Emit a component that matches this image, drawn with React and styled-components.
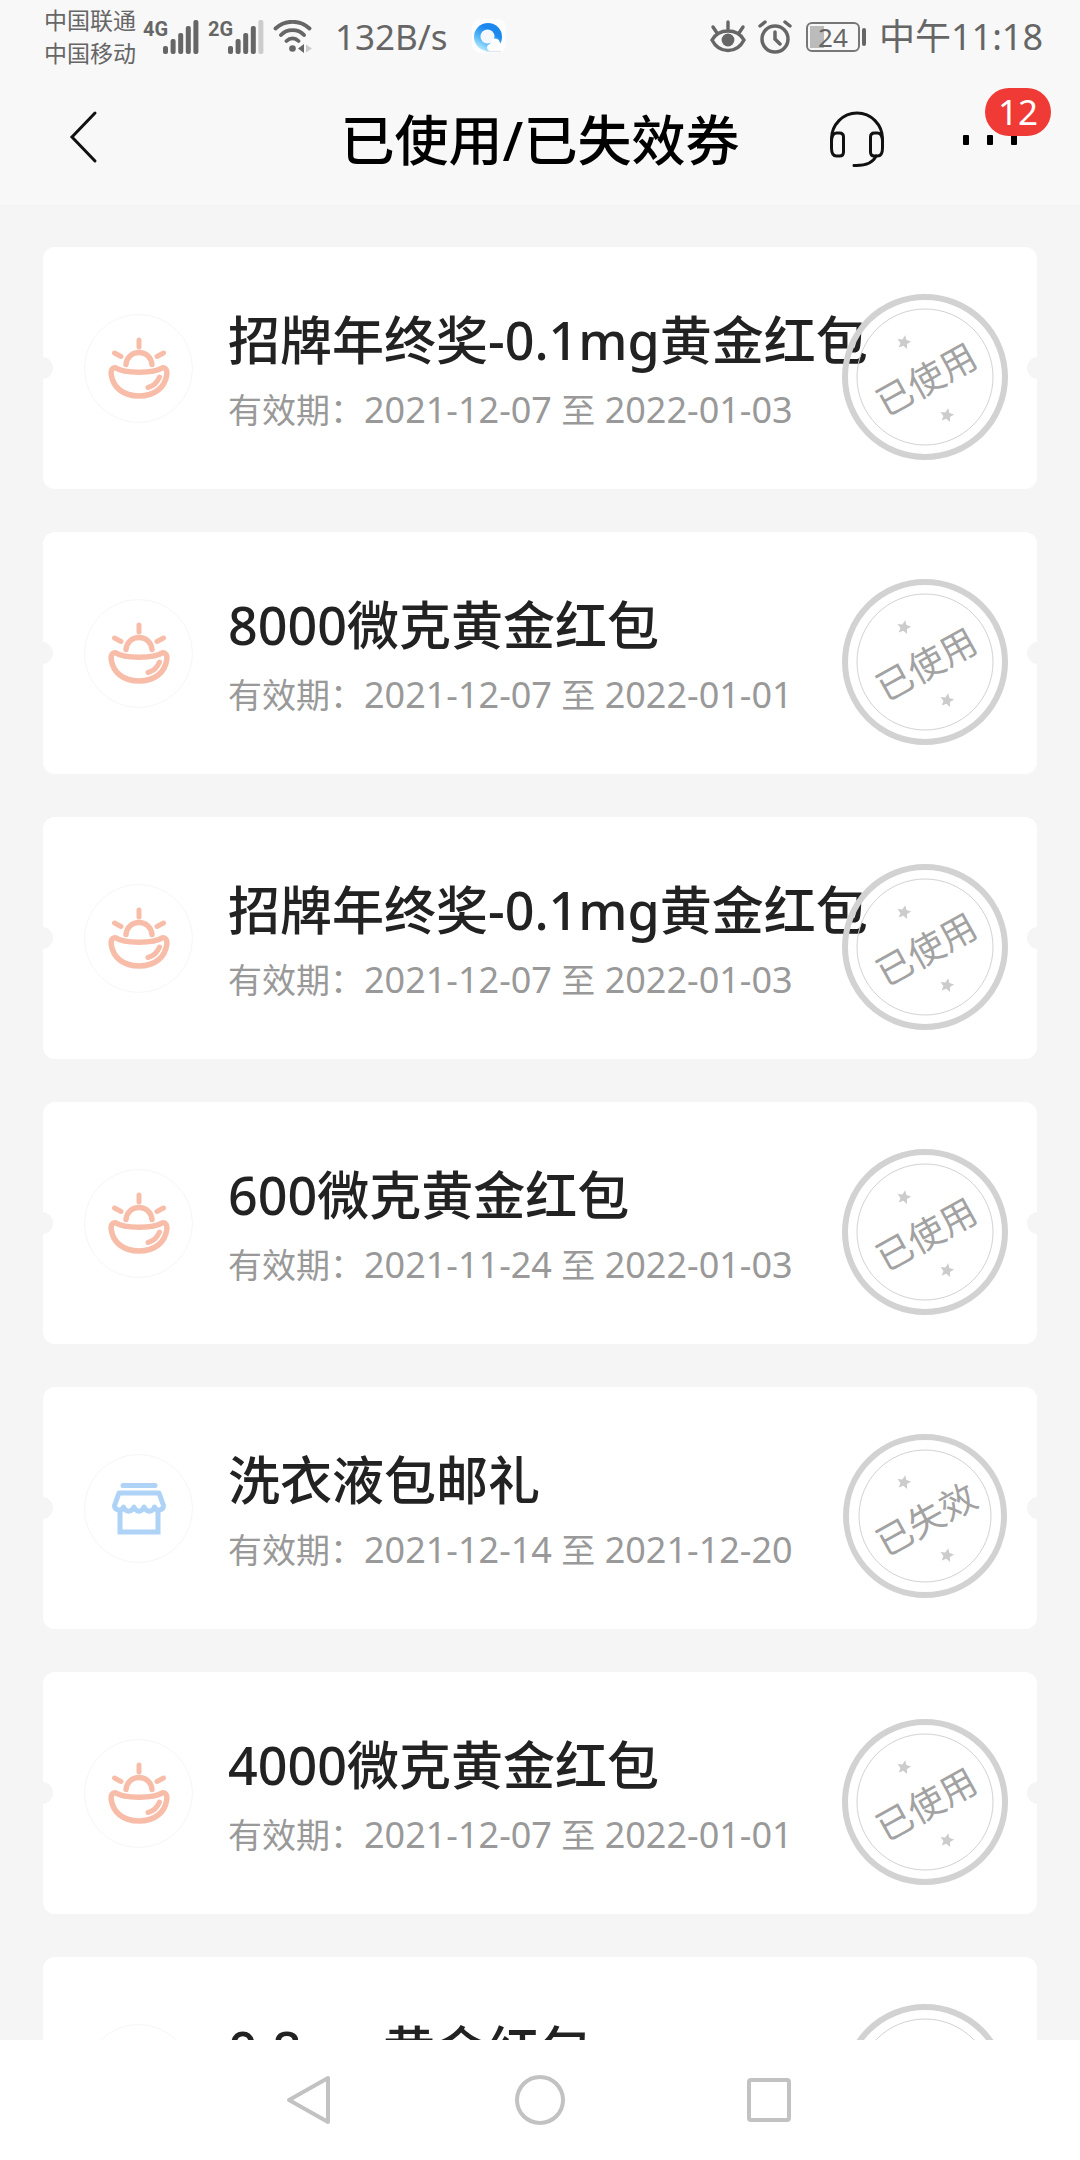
import React from "react";
import styled, { createGlobalStyle } from "styled-components";

const GlobalStyle = createGlobalStyle`
  * {
    box-sizing: border-box;
  }
  body {
    margin: 0;
    background: #f5f5f5;
    font-family: "Noto Sans", "Noto Sans CJK SC", sans-serif;
  }
  button {
    padding: 0;
    border: 0;
    background: none;
    font: inherit;
    cursor: pointer;
  }
  svg {
    display: block;
    flex: none;
  }
`;

const Page = styled.div`
  height: 100vh;
  display: flex;
  flex-direction: column;
  overflow: hidden;
`;

const StatusBar = styled.div`
  flex: none;
  height: 74px;
  padding: 0 37px 0 44px;
  display: flex;
  justify-content: space-between;
  background: #f8f8f8;
  color: #666;
`;

const StatusGroup = styled.div`
  display: flex;
  align-items: center;
`;

const Carriers = styled.div`
  font-size: 23px;
  line-height: 33px;
  margin-right: 7px;
`;

const Signal = styled.div`
  display: flex;
  align-items: flex-start;
  margin-right: 9px;
`;

const Network = styled.span`
  width: 20px;
  font: bold 20px/18px "Liberation Sans Narrow", "Roboto", sans-serif;
`;

const StatusText = styled.span`
  font-size: 36px;
  line-height: 40px;
`;

const Speed = styled(StatusText)`
  font-size: 35px;
  margin: 0 22px;
`;

const Battery = styled.div`
  display: flex;
  align-items: center;
  gap: 2px;
  margin: 0 13px 0 14px;
  &::after {
    content: "";
    width: 4px;
    height: 18px;
    border-radius: 2px;
    background: #666;
  }
`;

const BatteryBody = styled.span`
  width: 54px;
  height: 30px;
  border: 2px solid #777;
  border-radius: 6px;
  font-size: 26px;
  line-height: 26px;
  text-align: center;
  background: linear-gradient(#bbb, #bbb) 2px 2px / 14px 22px no-repeat;
`;

const Header = styled.header`
  flex: none;
  height: 132px;
  padding: 0 56px;
  display: grid;
  grid-template-columns: 1fr auto 1fr;
  align-items: center;
  background: #f8f8f8;
  border-bottom: 1px solid #f4f4f4;
`;

const Title = styled.h1`
  margin: 0;
  font-size: 54px;
  line-height: 64px;
  font-weight: 500;
  color: #000;
`;

const Actions = styled.div`
  display: flex;
  justify-content: flex-end;
  align-items: center;
  gap: 76px;
`;

const MoreButton = styled.button`
  position: relative;
  margin-right: 7px;
`;

const Badge = styled.span`
  position: absolute;
  left: 24px;
  bottom: 9px;
  width: 66px;
  height: 48px;
  border-radius: 24px;
  background: #f03a36;
  color: #fff;
  font-size: 35px;
  line-height: 48px;
  text-align: center;
`;

const List = styled.main`
  flex: 1;
  min-height: 0;
  overflow: hidden;
  padding: 41px 43px 0;
  display: flex;
  flex-direction: column;
  gap: 43px;
`;

const Card = styled.article`
  position: relative;
  flex: none;
  height: 242px;
  padding: 0 41px;
  display: flex;
  align-items: center;
  gap: 35px;
  border-radius: 12px;
  background: #fff;
`;

const Notch = styled.span`
  position: absolute;
  top: 110px;
  ${(p) => p.$side}: -12px;
  width: 22px;
  height: 22px;
  border-radius: 50%;
  background: #f5f5f5;
`;

const IconRing = styled.div`
  flex: none;
  width: 109px;
  height: 109px;
  display: flex;
  justify-content: center;
  align-items: center;
  border: 1px solid #f6f6f6;
  border-radius: 50%;
`;

const Info = styled.div`
  white-space: nowrap;
  padding-top: 12px;
`;

const Name = styled.h2`
  margin: 0;
  font-size: 52px;
  line-height: 72px;
  font-weight: 500;
  color: #222;
`;

const Validity = styled.p`
  margin: 0;
  font-size: 34px;
  line-height: 68px;
  color: #999;
`;

const Dates = styled.span`
  font-size: 36px;
`;

const StampBox = styled.div`
  position: absolute;
  top: 47px;
  right: 29px;
  width: 166px;
  height: 166px;
  display: flex;
  justify-content: center;
  align-items: center;
  svg {
    position: absolute;
    inset: 0;
  }
`;

const StampText = styled.span`
  font-family: "Noto Sans CJK SC", sans-serif;
  font-size: 36px;
  line-height: 40px;
  color: #a2a2a2;
  transform: rotate(-29deg);
`;

const NavBar = styled.nav`
  flex: none;
  height: 120px;
  display: flex;
  justify-content: center;
  align-items: center;
  gap: 180px;
  background: #fff;
`;

const coupons = [
  { name: "招牌年终奖-0.1mg黄金红包", from: "2021-12-07", to: "2022-01-03" },
  { name: "8000微克黄金红包", from: "2021-12-07", to: "2022-01-01" },
  { name: "招牌年终奖-0.1mg黄金红包", from: "2021-12-07", to: "2022-01-03" },
  { name: "600微克黄金红包", from: "2021-11-24", to: "2022-01-03" },
  { name: "洗衣液包邮礼", from: "2021-12-14", to: "2021-12-20", shop: true, expired: true },
  { name: "4000微克黄金红包", from: "2021-12-07", to: "2022-01-01" },
  { name: "0.8mg黄金红包" },
];

const SignalBars = ({ weak }) => (
  <svg width="36" height="34" viewBox="0 0 36 34">
    {[26, 19, 13, 6, 0].map((y, i) => (
      <rect key={y} x={i * 7.6} y={y} width="5" height={34 - y} rx="2" fill={weak && i === 4 ? "#ccc" : "#666"} />
    ))}
  </svg>
);

const WifiIcon = () => (
  <svg width="40" height="34" viewBox="0 0 40 34" fill="none" stroke="#666" strokeWidth="3.8" strokeLinecap="round">
    <path d="M2.5 8.500C12-.500 27-.500 36.500 8.500M8 15C14 8.500 25 8.500 31 15M13.500 21C17 17.500 22 17.500 25.500 21" />
    <circle cx="19.500" cy="28.500" r="3.300" fill="#666" stroke="none" />
    <path d="M31 24v9l-6-4.500z" fill="#666" stroke="none" />
    <path d="M33 24.500v8l6-4z" fill="#ccc" stroke="none" />
  </svg>
);

const BrowserIcon = () => (
  <svg width="38" height="38" viewBox="0 0 38 38">
    <defs>
      <linearGradient id="ring" x1="0.800" y1="0" x2="0.200" y2="1">
        <stop offset="0.300" stopColor="#1c88ee" />
        <stop offset="0.650" stopColor="#53b8f8" />
        <stop offset="1" stopColor="#c9f1fd" />
      </linearGradient>
    </defs>
    <rect x="2" y="1" width="34" height="34" rx="8" fill="#fdfdfd" />
    <circle cx="18" cy="19" r="14" fill="url(#ring)" />
    <circle cx="17.500" cy="18.500" r="7" fill="#f4f8fc" />
    <path d="M20 33c-4-1-4-6 0-7 1-7 9-7 10-1 4 1 5 8 0 8z" fill="#fff" />
    <path d="M16 33.500h15" stroke="#dfe6ee" strokeWidth="1.200" />
  </svg>
);

const EyeIcon = () => (
  <svg width="36" height="34" viewBox="0 0 36 34" fill="none" stroke="#666" strokeWidth="3.400" strokeLinecap="round">
    <path d="M2 20C9 8 27 8 34 20 27 34 9 34 2 20z" />
    <path d="M18 9V2M7 13 3 7M29 13l4-6" />
    <circle cx="18" cy="20" r="6.400" fill="#666" stroke="none" />
  </svg>
);

const AlarmIcon = () => (
  <svg width="34" height="34" viewBox="0 0 34 34" fill="none" stroke="#666" strokeWidth="3.500" strokeLinecap="round">
    <circle cx="17" cy="19" r="13" />
    <path d="M17 12v7l5 5M2 6l5-4M32 6l-5-4" />
  </svg>
);

const HeadsetIcon = () => (
  <svg width="56" height="58" viewBox="0 0 56 58" fill="none" stroke="#111" strokeWidth="3">
    <path d="M2.500 33V28a25.500 26 0 0 1 51 0v5" />
    <path d="M2.500 31c0-5 1-9 5-9h3q4 0 4 4v15q0 4-4 4h-3c-4 0-5-4-5-8z" />
    <path d="M53.500 31c0-5-1-9-5-9h-3q-4 0-4 4v15q0 4 4 4h3c4 0 5-4 5-8z" />
    <path d="M47 45c-3 7-10 10-22 9.500" strokeLinecap="round" />
  </svg>
);

const IngotIcon = () => (
  <svg width="62" height="62" viewBox="0 0 62 62" fill="none" stroke="#f8bda9" strokeWidth="5.500" strokeLinecap="round" strokeLinejoin="round">
    <path d="M8 31C16 36.500 46 36.500 54 31 57.500 30 59.500 33 58.700 38 57 50 47 59 31 59S5 50 3.300 38C2.500 33 4.500 30 8 31z" />
    <path d="M18 27.500C19.500 11.500 42.500 11.500 44 27.500" />
    <path d="M31 3v7M6.500 16l6.500 3.500M55.500 16l-6.500 3.500M51.500 40c-2 5-6 9-11.500 10.500" strokeWidth="5" />
  </svg>
);

const ShopIcon = () => (
  <svg width="56" height="54" viewBox="0 0 56 54" fill="none" stroke="#afd2f7" strokeWidth="5" strokeLinejoin="round">
    <path d="M12 4.500h32" strokeLinecap="round" />
    <path d="M8 12h40l4.500 12.500c0 5-7 6.500-9 1.500-2 5.500-8 5.500-10.500 0-2 5.500-8 5.500-10 0-2.500 5.500-8.500 5.500-10.500 0-2 5-9 3.500-9-1.500z" />
    <path d="M9 31v20h38V31" strokeLinejoin="miter" />
  </svg>
);

const STAR = "M0-6 1.800-2 6-1.600 2.900 1.300 3.700 5.600 0 3.400-3.700 5.600-2.900 1.300-6-1.600-1.800-2z";

const Stamp = ({ expired }) => (
  <StampBox>
    <svg viewBox="0 0 166 166" fill="none" stroke="#d2d2d2">
      <circle cx="83" cy={expired ? 82 : 83} r={expired ? 79 : 80} strokeWidth="6" />
      <circle cx="83" cy={expired ? 82 : 83} r={expired ? 66 : 68} />
      <path d={STAR} transform="translate(62 48) rotate(10) scale(1.15)" fill="#ccc" stroke="none" />
      <path d={STAR} transform="translate(105 121) rotate(10) scale(1.15)" fill="#ccc" stroke="none" />
    </svg>
    <StampText>{expired ? "已失效" : "已使用"}</StampText>
  </StampBox>
);

export default function App() {
  return (
    <Page>
      <GlobalStyle />
      <StatusBar>
        <StatusGroup>
          <Carriers>
            <div>中国联通</div>
            <div>中国移动</div>
          </Carriers>
          <Signal>
            <Network>4G</Network>
            <SignalBars />
          </Signal>
          <Signal>
            <Network>2G</Network>
            <SignalBars weak />
          </Signal>
          <WifiIcon />
          <Speed>132B/s</Speed>
          <BrowserIcon />
        </StatusGroup>
        <StatusGroup>
          <StatusGroup style={{ gap: 12 }}>
            <EyeIcon />
            <AlarmIcon />
          </StatusGroup>
          <Battery>
            <BatteryBody>24</BatteryBody>
          </Battery>
          <StatusText>中午11:18</StatusText>
        </StatusGroup>
      </StatusBar>

      <Header>
        <div>
          <button aria-label="返回">
            <svg width="56" height="56" viewBox="0 0 56 56" fill="none" stroke="#111" strokeWidth="3" strokeLinecap="round">
              <path d="M39 4 16 28l23 24" />
            </svg>
          </button>
        </div>
        <Title>已使用/已失效券</Title>
        <Actions>
          <button aria-label="客服">
            <HeadsetIcon />
          </button>
          <MoreButton aria-label="更多">
            <svg width="56" height="10" viewBox="0 0 56 10">
              <rect x="2" width="6" height="10" rx="1" />
              <rect x="26" width="6" height="10" rx="1" />
              <rect x="50" width="6" height="10" rx="1" />
            </svg>
            <Badge>12</Badge>
          </MoreButton>
        </Actions>
      </Header>

      <List>
        {coupons.map((c, i) => (
          <Card key={i}>
            <Notch $side="left" />
            <Notch $side="right" />
            <IconRing>{c.shop ? <ShopIcon /> : <IngotIcon />}</IconRing>
            <Info>
              <Name>{c.name}</Name>
              <Validity>
                有效期：
                {c.from && (
                  <>
                    <Dates>{c.from} </Dates>至<Dates> {c.to}</Dates>
                  </>
                )}
              </Validity>
            </Info>
            <Stamp expired={c.expired} />
          </Card>
        ))}
      </List>

      <NavBar>
        <button aria-label="后退">
          <svg width="50" height="52" viewBox="0 0 50 52" fill="none" stroke="#c2c2c2" strokeWidth="4" strokeLinejoin="round">
            <path d="M43 4v44L4 26z" />
          </svg>
        </button>
        <button aria-label="主页">
          <svg width="50" height="52" viewBox="0 0 50 52" fill="none" stroke="#c2c2c2" strokeWidth="4">
            <circle cx="25" cy="26" r="23" />
          </svg>
        </button>
        <button aria-label="最近任务">
          <svg width="50" height="52" viewBox="0 0 50 52" fill="none" stroke="#c2c2c2" strokeWidth="4">
            <rect x="4" y="6" width="40" height="40" rx="2" />
          </svg>
        </button>
      </NavBar>
    </Page>
  );
}
